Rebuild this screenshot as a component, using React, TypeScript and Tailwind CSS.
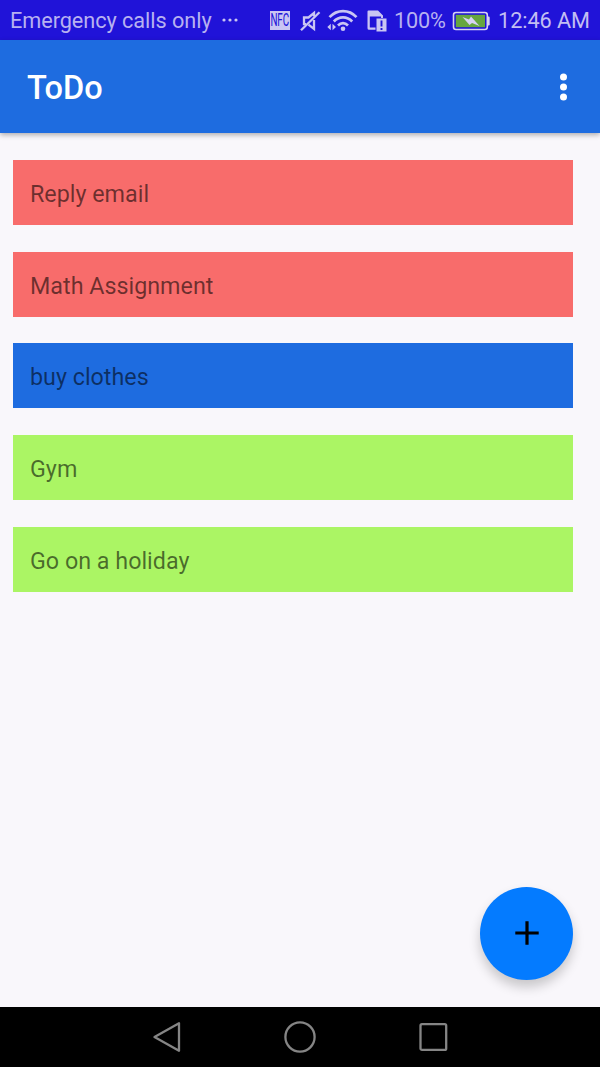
const tasks = [
  { title: "Reply email", tone: "bg-[#f86c6b]" },
  { title: "Math Assignment", tone: "bg-[#f86c6b]" },
  { title: "buy clothes", tone: "bg-[#1e6ce0]" },
  { title: "Gym", tone: "bg-[#abf564]" },
  { title: "Go on a holiday", tone: "bg-[#abf564]" },
];

function NfcIcon() {
  return (
    <div className="flex h-[19px] w-[20px] items-center justify-center bg-[#c9c5f3]">
      <span className="origin-center scale-x-[0.56] text-[17.5px] leading-none font-normal text-[#2013d8]">NFC</span>
    </div>
  );
}

function MuteIcon() {
  return (
    <svg className="ml-[9px] h-[22px] w-[22px]" viewBox="0 0 22 22" fill="none" stroke="#c9c5f3" strokeWidth="2.3">
      <path d="M15 6.5V3L9.5 7.5H5V14.2H7" />
      <path d="M15 10V18.8L9.5 14.6" />
      <path d="M2 20.3 20.5 2.3" />
    </svg>
  );
}

function WifiIcon() {
  return (
    <svg className="ml-[6px] h-[23px] w-[31px]" viewBox="0 0 31 23" fill="none" stroke="#c9c5f3" strokeWidth="2.7">
      <path d="M2.5 8.2C10 .2 22 .2 29.5 8.2" />
      <path d="M6.8 12.5C12 7 20 7 25.2 12.5" />
      <path d="M11 16.5C14 13.4 18 13.4 21 16.5" />
      <circle cx="16" cy="19.8" r="2.3" fill="#c9c5f3" stroke="none" />
      <path d="M.3 18 3.8 14.8V21.2ZM9 18 5.5 14.8V21.2Z" fill="#c9c5f3" stroke="none" />
    </svg>
  );
}

function SimAlertIcon() {
  return (
    <svg className="ml-[9px] h-[22px] w-[20px]" viewBox="0 0 20 22">
      <path d="M.5 1.5Q.5.5 1.5.5H11L16 5.5V8H14V6.5H2.8V17.5H8.5V19.8H2Q.5 19.8.5 18.2Z" fill="#c9c5f3" />
      <rect x="9.5" y="8.5" width="10" height="13" fill="#c9c5f3" />
      <path d="M14.5 10.5V16.5M14.5 18V20" stroke="#2013d8" strokeWidth="1.9" />
    </svg>
  );
}

function BatteryIcon() {
  return (
    <svg className="ml-[6px] h-[20px] w-[38px]" viewBox="0 0 38 20">
      <rect x="1.5" y="1.5" width="33.8" height="17" rx="2.5" fill="#2013d8" stroke="#d6d3f2" strokeWidth="1.6" />
      <path d="M35.5 5.5H36.7Q37.7 5.5 37.7 6.7V13.3Q37.7 14.5 36.7 14.5H35.5Z" fill="#d6d3f2" />
      <rect x="3.8" y="3.8" width="29.2" height="12.4" fill="#66a640" />
      <path d="M10.5 6 17 8.5 19 5.5 27.5 15 20 12 17.5 14Z" fill="#d6d3f2" />
    </svg>
  );
}

function StatusBar() {
  return (
    <header className="flex h-[40px] shrink-0 items-center bg-[#2013d8] text-[21.7px] leading-none whitespace-nowrap text-[#b7b1f0]">
      <span className="ml-[10px] w-[202px] pt-[2px] tracking-[-0.06px]">Emergency calls only</span>
      <svg className="ml-[9px] h-[4px] w-[18px]" viewBox="0 0 18 4" fill="#c9c5f3">
        <circle cx="3" cy="2" r="1.6" />
        <circle cx="9" cy="2" r="1.6" />
        <circle cx="15" cy="2" r="1.6" />
      </svg>
      <div className="ml-[31px] flex items-center pt-[1px]">
        <NfcIcon />
        <MuteIcon />
        <WifiIcon />
        <SimAlertIcon />
        <span className="ml-[7px] w-[52px] pt-[1px] tracking-[-0.15px]">100%</span>
        <BatteryIcon />
        <span className="ml-[8px] pt-[1px] tracking-[-0.06px] text-[#c2bef2]">12:46 AM</span>
      </div>
    </header>
  );
}

export default function App() {
  return (
    <div className="flex h-[1067px] w-[600px] flex-col overflow-hidden bg-[#f9f7fb] font-['Roboto',sans-serif]">
      <StatusBar />
      <div className="z-10 flex h-[93px] shrink-0 items-center justify-between bg-[#1e6ce0] pr-[32px] pl-[27px] shadow-[0_2px_5px_rgba(0,0,0,0.3)]">
        <h1 className="pt-[4px] text-[32.5px] leading-none font-medium text-white">ToDo</h1>
        <button aria-label="More options">
          <svg className="h-[28px] w-[9px]" viewBox="0 0 9 28" fill="white">
            <circle cx="4.5" cy="4" r="3.5" />
            <circle cx="4.5" cy="14" r="3.5" />
            <circle cx="4.5" cy="24" r="3.5" />
          </svg>
        </button>
      </div>
      <main className="relative min-h-0 flex-1">
        <ul className="flex flex-col gap-[26.7px] pt-[27px] pr-[26.6px] pl-[13px]">
          {tasks.map((task) => (
            <li key={task.title} className={`flex h-[65px] items-center pt-[4px] pl-[17px] text-[23.3px] leading-none text-black/57 ${task.tone}`}>
              {task.title}
            </li>
          ))}
        </ul>
        <button aria-label="Add task" className="absolute right-[26.6px] bottom-[27px] flex size-[93.4px] items-center justify-center rounded-full bg-[#047bff] shadow-[0_7px_12px_rgba(0,0,0,0.2)]">
          <svg className="size-[24px]" viewBox="0 0 24 24" stroke="black" strokeWidth="3.2">
            <path d="M12 .3V23.7M.3 12H23.7" />
          </svg>
        </button>
      </main>
      <nav className="flex h-[60px] shrink-0 items-center justify-center gap-[102px] bg-black">
        <svg className="h-[32px] w-[32px]" viewBox="0 0 32 32" fill="none" stroke="#858585" strokeWidth="2.3" strokeLinejoin="round">
          <path d="M4.5 16 29 2.2V29.8Z" />
        </svg>
        <svg className="size-[32px]" viewBox="0 0 32 32" fill="none" stroke="#858585" strokeWidth="2.3">
          <circle cx="16" cy="16" r="14.6" />
        </svg>
        <svg className="size-[32px]" viewBox="0 0 32 32" fill="none" stroke="#858585" strokeWidth="2.3">
          <rect x="2.5" y="3.2" width="25.7" height="25.7" rx="1.5" />
        </svg>
      </nav>
    </div>
  );
}
